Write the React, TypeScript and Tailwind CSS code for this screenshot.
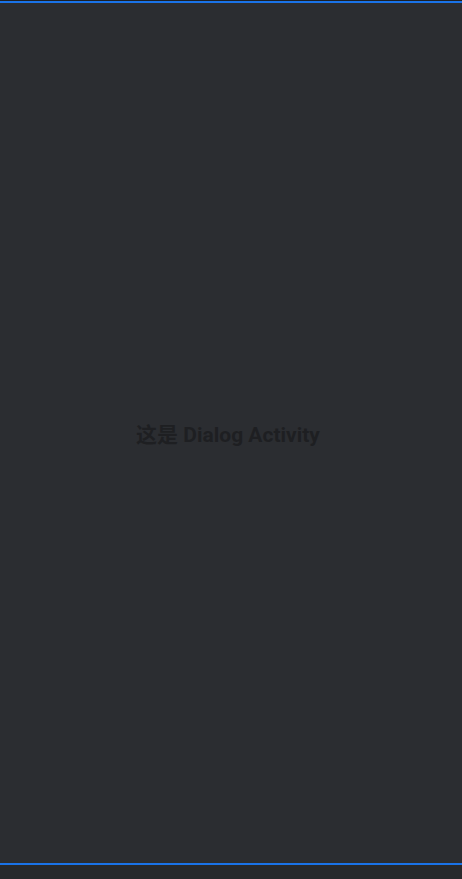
export default function App() {
  return (
    <div className="flex flex-col w-[462px] h-[879px] bg-[#2b2d31] font-['Roboto','Noto_Sans_CJK_SC',sans-serif]">
      <div className="h-px bg-[#1f2023]" />
      <div className="h-[2px] bg-[#1a73e8]" />
      <div className="flex flex-1 items-center justify-center pt-[6px] pr-[6px]">
        <span className="text-[21px] font-bold text-[#1e1f22]">这是 Dialog Activity</span>
      </div>
      <div className="h-[2px] bg-[#1a73e8]" />
      <div className="h-[14px] bg-[#27292c]" />
    </div>
  )
}
